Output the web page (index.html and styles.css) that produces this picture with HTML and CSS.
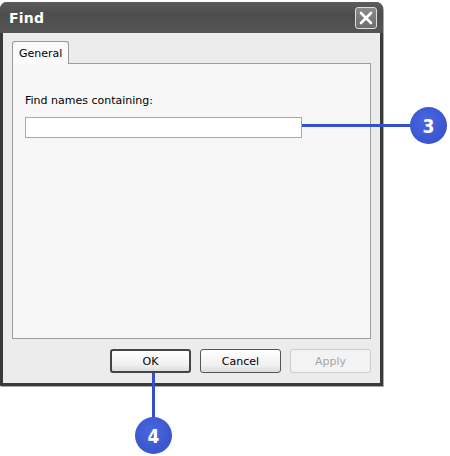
FILE: index.html
```html
<!DOCTYPE html>
<html lang="en">
<head>
  <meta charset="UTF-8" />
  <title>Find</title>
  <link rel="stylesheet" href="styles.css">
</head>
<body>
  <div class="window">
    <div class="titlebar">
      <span class="title">Find</span>
      <span class="close">
        <svg width="14" height="14" viewBox="0 0 14 14">
          <path d="M2 2 L12 12 M12 2 L2 12" stroke="#fff" stroke-width="2.6" stroke-linecap="round" />
        </svg>
      </span>
    </div>
    <div class="content">
      <div class="tabs">
        <div class="tab">General</div>
      </div>
      <div class="panel">
        <label class="label" for="names">Find names containing:</label>
        <input class="field" id="names" type="text" />
      </div>
      <div class="buttons">
        <button class="btn btn-default">OK</button>
        <button class="btn">Cancel</button>
        <button class="btn btn-disabled" disabled>Apply</button>
      </div>
    </div>
  </div>

  <!-- callouts -->
  <div class="line line-3"></div>
  <div class="callout callout-3">3</div>
  <div class="line line-4"></div>
  <div class="callout callout-4">4</div>
</body>
</html>
```

FILE: styles.css
```css
body {
  margin: 0;
  background: #fff;
  font-family: "DejaVu Sans", "Liberation Sans", sans-serif;
  font-size: 11px;
  color: #000;
  position: relative;
  width: 450px;
  height: 456px;
  overflow: hidden;
}

.window {
  margin-top: 2px;
  width: 377px;
  border: 3px solid #3a3a3a;
  border-top: none;
  border-radius: 7px 7px 0 0;
  background: #ececec;
  box-shadow: 1px 1px 0 #aaa;
}

.titlebar {
  height: 31px;
  margin: 0 -3px;
  padding: 0 6px 0 9px;
  border-radius: 7px 7px 0 0;
  background: linear-gradient(#5c5c5c, #4d4d4d 40%, #555 100%);
  display: flex;
  align-items: center;
  justify-content: space-between;
}

.title {
  color: #fff;
  font-weight: bold;
  font-size: 14px;
  letter-spacing: 0.2px;
}

.close {
  width: 20px;
  height: 20px;
  border: 1px solid #ddd;
  border-radius: 3px;
  background: linear-gradient(#8a8a8a, #6c6c6c);
  display: flex;
  align-items: center;
  justify-content: center;
}

.content {
  padding: 8px 9px 10px 9px;
}

.tabs {
  display: flex;
}

.tab {
  width: 57px;
  height: 23px;
  box-sizing: border-box;
  border: 1px solid #999;
  border-bottom: none;
  border-radius: 3px 3px 0 0;
  background: #fafafa;
  padding: 1px 0 0 6px;
  line-height: 21px;
  margin-bottom: -1px;
  position: relative;
  z-index: 1;
}

.panel {
  height: 276px;
  box-sizing: border-box;
  border: 1px solid #9c9c9c;
  background: #f7f7f7;
  padding: 30px 0 0 12px;
  display: flex;
  flex-direction: column;
  align-items: flex-start;
}

.label {
  font-size: 11px;
  line-height: 13px;
  margin-bottom: 10px;
}

.field {
  width: 277px;
  height: 21px;
  box-sizing: border-box;
  border: 1px solid #a8a8a8;
  background: #fff;
  margin: 0;
}

.buttons {
  display: flex;
  justify-content: flex-end;
  gap: 9px;
  margin-top: 10px;
}

.btn {
  width: 81px;
  height: 24px;
  font-family: inherit;
  font-size: 11px;
  border: 1px solid #555;
  border-radius: 3px;
  background: linear-gradient(#fff, #f0f0f0 70%, #dcdcdc);
  color: #000;
  padding: 0;
}

.btn-default {
  border: 2px solid #444;
}

.btn-disabled {
  border-color: #ccc;
  color: #a6a6a6;
  background: #f3f3f3;
}

.line {
  position: absolute;
  background: #3550c9;
}

.line-3 {
  left: 302px;
  top: 124px;
  width: 110px;
  height: 3px;
}

.line-4 {
  left: 152px;
  top: 373px;
  width: 3px;
  height: 45px;
}

.callout {
  position: absolute;
  width: 37px;
  height: 37px;
  border-radius: 50%;
  background: radial-gradient(circle at 45% 40%, #4a68e0, #3a55cf 70%, #2e46b5);
  color: #fff;
  font-family: "DejaVu Sans Condensed", "DejaVu Sans", sans-serif;
  font-weight: bold;
  font-size: 19px;
  display: flex;
  align-items: center;
  justify-content: center;
}

.callout-3 {
  left: 410px;
  top: 107px;
}

.callout-4 {
  left: 135px;
  top: 417px;
}
```
